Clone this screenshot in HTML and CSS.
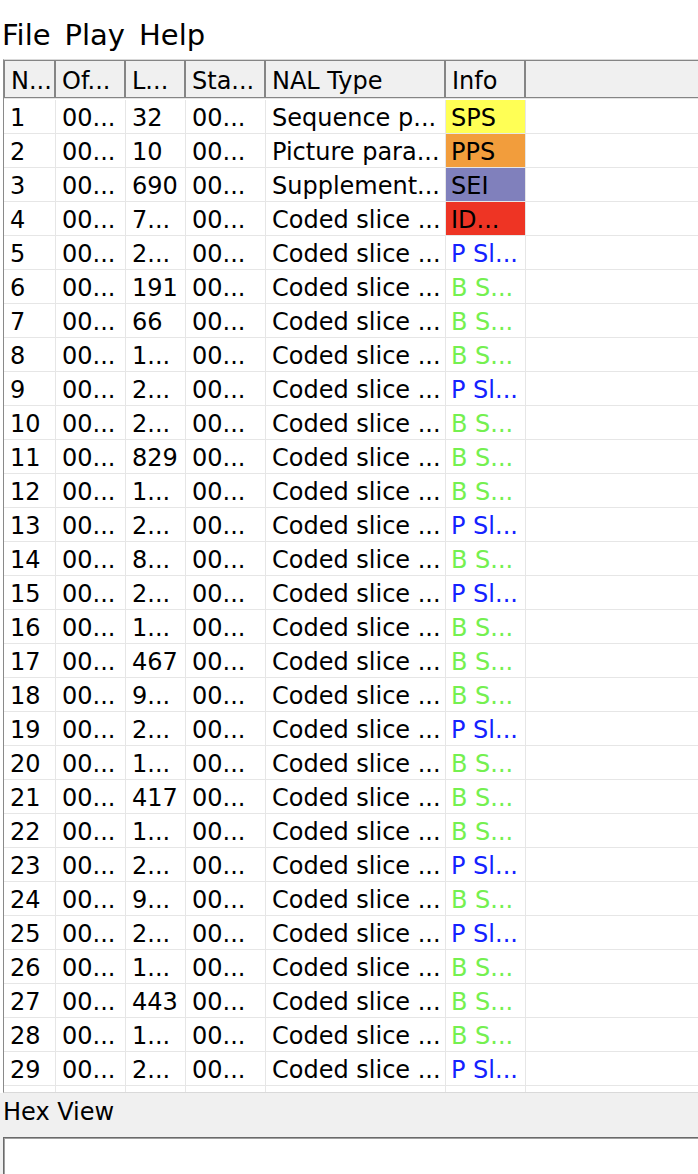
FILE: index.html
```html
<!DOCTYPE html>
<html>
<head>
<meta charset="utf-8">
<link rel="stylesheet" href="styles.css">
</head>
<body>
<div class="menubar">
  <span class="menu-item">File</span>
  <span class="menu-item">Play</span>
  <span class="menu-item">Help</span>
</div>
<div class="table-frame">
  <div class="header">
    <div class="hsec first">N...</div>
    <div class="hsec">Of...</div>
    <div class="hsec">L...</div>
    <div class="hsec">Sta...</div>
    <div class="hsec">NAL Type</div>
    <div class="hsec">Info</div>
    <div class="hsec last"></div>
  </div>
  <div class="rows">
    <div class="row"><div class="cell">1</div><div class="cell">00...</div><div class="cell">32</div><div class="cell">00...</div><div class="cell">Sequence p...</div><div class="cell info sps">SPS</div><div class="cell rest"></div></div>
    <div class="row"><div class="cell">2</div><div class="cell">00...</div><div class="cell">10</div><div class="cell">00...</div><div class="cell">Picture para...</div><div class="cell info pps">PPS</div><div class="cell rest"></div></div>
    <div class="row"><div class="cell">3</div><div class="cell">00...</div><div class="cell">690</div><div class="cell">00...</div><div class="cell">Supplement...</div><div class="cell info sei">SEI</div><div class="cell rest"></div></div>
    <div class="row"><div class="cell">4</div><div class="cell">00...</div><div class="cell">7...</div><div class="cell">00...</div><div class="cell">Coded slice ...</div><div class="cell info idr">ID...</div><div class="cell rest"></div></div>
    <div class="row"><div class="cell">5</div><div class="cell">00...</div><div class="cell">2...</div><div class="cell">00...</div><div class="cell">Coded slice ...</div><div class="cell info p">P Sl...</div><div class="cell rest"></div></div>
    <div class="row"><div class="cell">6</div><div class="cell">00...</div><div class="cell">191</div><div class="cell">00...</div><div class="cell">Coded slice ...</div><div class="cell info b">B S...</div><div class="cell rest"></div></div>
    <div class="row"><div class="cell">7</div><div class="cell">00...</div><div class="cell">66</div><div class="cell">00...</div><div class="cell">Coded slice ...</div><div class="cell info b">B S...</div><div class="cell rest"></div></div>
    <div class="row"><div class="cell">8</div><div class="cell">00...</div><div class="cell">1...</div><div class="cell">00...</div><div class="cell">Coded slice ...</div><div class="cell info b">B S...</div><div class="cell rest"></div></div>
    <div class="row"><div class="cell">9</div><div class="cell">00...</div><div class="cell">2...</div><div class="cell">00...</div><div class="cell">Coded slice ...</div><div class="cell info p">P Sl...</div><div class="cell rest"></div></div>
    <div class="row"><div class="cell">10</div><div class="cell">00...</div><div class="cell">2...</div><div class="cell">00...</div><div class="cell">Coded slice ...</div><div class="cell info b">B S...</div><div class="cell rest"></div></div>
    <div class="row"><div class="cell">11</div><div class="cell">00...</div><div class="cell">829</div><div class="cell">00...</div><div class="cell">Coded slice ...</div><div class="cell info b">B S...</div><div class="cell rest"></div></div>
    <div class="row"><div class="cell">12</div><div class="cell">00...</div><div class="cell">1...</div><div class="cell">00...</div><div class="cell">Coded slice ...</div><div class="cell info b">B S...</div><div class="cell rest"></div></div>
    <div class="row"><div class="cell">13</div><div class="cell">00...</div><div class="cell">2...</div><div class="cell">00...</div><div class="cell">Coded slice ...</div><div class="cell info p">P Sl...</div><div class="cell rest"></div></div>
    <div class="row"><div class="cell">14</div><div class="cell">00...</div><div class="cell">8...</div><div class="cell">00...</div><div class="cell">Coded slice ...</div><div class="cell info b">B S...</div><div class="cell rest"></div></div>
    <div class="row"><div class="cell">15</div><div class="cell">00...</div><div class="cell">2...</div><div class="cell">00...</div><div class="cell">Coded slice ...</div><div class="cell info p">P Sl...</div><div class="cell rest"></div></div>
    <div class="row"><div class="cell">16</div><div class="cell">00...</div><div class="cell">1...</div><div class="cell">00...</div><div class="cell">Coded slice ...</div><div class="cell info b">B S...</div><div class="cell rest"></div></div>
    <div class="row"><div class="cell">17</div><div class="cell">00...</div><div class="cell">467</div><div class="cell">00...</div><div class="cell">Coded slice ...</div><div class="cell info b">B S...</div><div class="cell rest"></div></div>
    <div class="row"><div class="cell">18</div><div class="cell">00...</div><div class="cell">9...</div><div class="cell">00...</div><div class="cell">Coded slice ...</div><div class="cell info b">B S...</div><div class="cell rest"></div></div>
    <div class="row"><div class="cell">19</div><div class="cell">00...</div><div class="cell">2...</div><div class="cell">00...</div><div class="cell">Coded slice ...</div><div class="cell info p">P Sl...</div><div class="cell rest"></div></div>
    <div class="row"><div class="cell">20</div><div class="cell">00...</div><div class="cell">1...</div><div class="cell">00...</div><div class="cell">Coded slice ...</div><div class="cell info b">B S...</div><div class="cell rest"></div></div>
    <div class="row"><div class="cell">21</div><div class="cell">00...</div><div class="cell">417</div><div class="cell">00...</div><div class="cell">Coded slice ...</div><div class="cell info b">B S...</div><div class="cell rest"></div></div>
    <div class="row"><div class="cell">22</div><div class="cell">00...</div><div class="cell">1...</div><div class="cell">00...</div><div class="cell">Coded slice ...</div><div class="cell info b">B S...</div><div class="cell rest"></div></div>
    <div class="row"><div class="cell">23</div><div class="cell">00...</div><div class="cell">2...</div><div class="cell">00...</div><div class="cell">Coded slice ...</div><div class="cell info p">P Sl...</div><div class="cell rest"></div></div>
    <div class="row"><div class="cell">24</div><div class="cell">00...</div><div class="cell">9...</div><div class="cell">00...</div><div class="cell">Coded slice ...</div><div class="cell info b">B S...</div><div class="cell rest"></div></div>
    <div class="row"><div class="cell">25</div><div class="cell">00...</div><div class="cell">2...</div><div class="cell">00...</div><div class="cell">Coded slice ...</div><div class="cell info p">P Sl...</div><div class="cell rest"></div></div>
    <div class="row"><div class="cell">26</div><div class="cell">00...</div><div class="cell">1...</div><div class="cell">00...</div><div class="cell">Coded slice ...</div><div class="cell info b">B S...</div><div class="cell rest"></div></div>
    <div class="row"><div class="cell">27</div><div class="cell">00...</div><div class="cell">443</div><div class="cell">00...</div><div class="cell">Coded slice ...</div><div class="cell info b">B S...</div><div class="cell rest"></div></div>
    <div class="row"><div class="cell">28</div><div class="cell">00...</div><div class="cell">1...</div><div class="cell">00...</div><div class="cell">Coded slice ...</div><div class="cell info b">B S...</div><div class="cell rest"></div></div>
    <div class="row"><div class="cell">29</div><div class="cell">00...</div><div class="cell">2...</div><div class="cell">00...</div><div class="cell">Coded slice ...</div><div class="cell info p">P Sl...</div><div class="cell rest"></div></div>
    <div class="row"><div class="cell"></div><div class="cell"></div><div class="cell"></div><div class="cell"></div><div class="cell"></div><div class="cell info"></div><div class="cell rest"></div></div>
  </div>
</div>
<div class="dock">
  <div class="dock-title">Hex View</div>
  <div class="hexbox"></div>
</div>
</body>
</html>
```
FILE: styles.css
```css
html, body {
  margin: 0;
  padding: 0;
  background: #ffffff;
  font-family: "DejaVu Sans", "Noto Sans", sans-serif;
  color: #000;
  overflow: hidden;
}

.menubar {
  height: 59px;
  display: flex;
  align-items: flex-end;
  padding-left: 2px;
  gap: 14px;
  font-size: 29px;
  box-sizing: border-box;
  padding-bottom: 7px;
}

.menu-item {
  line-height: 34px;
}

.table-frame {
  margin-left: 3px;
  height: 1032px;
  border-top: 1px solid #d9d9d9;
  border-left: 1px solid #8a8a8a;
  border-bottom: 1px solid #d9d9d9;
  overflow: hidden;
  font-size: 24px;
}

.header {
  display: grid;
  grid-template-columns: 51px 70px 60px 80px 180px 80px 1fr;
  height: 38px;
  background: #ffffff;
}

.hsec {
  box-sizing: border-box;
  background: #f0f0f0;
  border: 1px solid #858585;
  padding-left: 6px;
  padding-top: 3px;
  display: flex;
  align-items: center;
  white-space: nowrap;
  overflow: hidden;
}

.hsec.last {
  border-right: none;
}

.rows {
  border-top: 1px solid #e3e3e3;
  padding-top: 1px;
}

.row {
  display: grid;
  grid-template-columns: 52px 70px 60px 80px 180px 80px 1fr;
  height: 34px;
  box-sizing: border-box;
  border-bottom: 1px solid #e6e6e6;
}

.cell {
  box-sizing: border-box;
  border-right: 1px solid #e6e6e6;
  background-clip: padding-box;
  padding-left: 6px;
  padding-top: 2px;
  display: flex;
  align-items: center;
  white-space: nowrap;
  overflow: hidden;
}

.cell.info {
  padding-left: 5px;
}

.cell.rest {
  border-right: none;
}

.sps { background-color: #ffff55; }
.pps { background-color: #f29d3c; }
.sei { background-color: #8080bc; }
.idr { background-color: #ee3424; }
.p { color: #1422ff; }
.b { color: #74f050; }

.dock {
  background: #f0f0f0;
  height: 81px;
  display: flex;
  flex-direction: column;
}

.dock-title {
  font-size: 24px;
  height: 44px;
  box-sizing: border-box;
  padding-left: 3px;
  padding-bottom: 7px;
  display: flex;
  align-items: center;
}

.hexbox {
  flex: 1;
  margin-left: 3px;
  background: #ffffff;
  border-top: 1px solid #6a6a6a;
  border-left: 1px solid #6a6a6a;
  box-shadow: inset 1px 1px 0 #a0a0a0;
}
```
